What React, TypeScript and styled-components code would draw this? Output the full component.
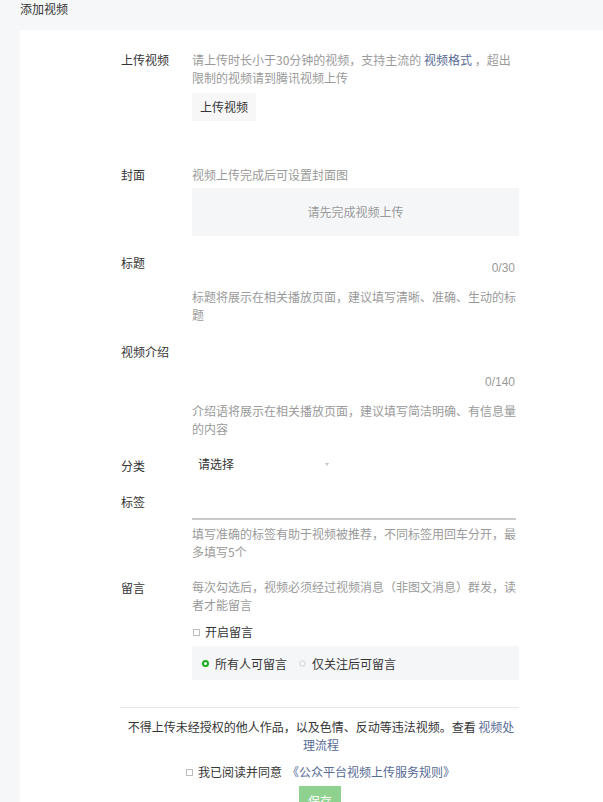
import styled, { createGlobalStyle } from "styled-components";

const GlobalStyle = createGlobalStyle`
  body {
    margin: 0;
    background-color: #f6f7f9;
    font-family: "Noto Sans CJK SC", "Noto Sans", sans-serif;
    font-size: 12px;
    color: #353535;
  }
`;

const Header = styled.div`
  height: 30px;
  padding-left: 20px;
  line-height: 18px;
  font-size: 12px;
  color: #353535;
`;

const Card = styled.div`
  margin-left: 20px;
  background-color: #fff;
  padding: 21px 0 20px 101px;
  min-height: 760px;
`;

const Form = styled.div`
  width: 398px;
`;

// 한 줄 = 라벨 + 입력
const Field = styled.div<{ gap?: number }>`
  display: grid;
  grid-template-columns: 71px 327px;
  margin-bottom: ${({ gap }) => gap ?? 0}px;
`;

const Label = styled.div<{ offset?: number }>`
  line-height: 18px;
  padding-top: ${({ offset }) => offset ?? 0}px;
  color: #353535;
`;

const Control = styled.div`
  display: flex;
  flex-direction: column;
`;

const Hint = styled.div<{ top?: number }>`
  line-height: 18px;
  color: #9a9a9a;
  margin-top: ${({ top }) => top ?? 0}px;
`;

const Link = styled.span`
  color: #576b95;
`;

const UploadBtn = styled.div`
  align-self: flex-start;
  margin-top: 6px;
  height: 28px;
  line-height: 28px;
  padding: 0 8px;
  background-color: #f7f7f8;
  color: #353535;
`;

const CoverBox = styled.div`
  margin-top: 4px;
  height: 48px;
  line-height: 48px;
  text-align: center;
  background-color: #f5f6f8;
  color: #9a9a9a;
`;

const TextBox = styled.div<{ h: number }>`
  height: ${({ h }) => h}px;
  display: flex;
  align-items: flex-end;
  justify-content: flex-end;
  padding: 0 4px 7px 0;
  box-sizing: border-box;
`;

const Counter = styled.span`
  line-height: 18px;
  color: #9a9a9a;
  font-family: "Liberation Sans", "Noto Sans", sans-serif;
  font-size: 12px;
`;

const Select = styled.div`
  width: 142px;
  height: 28px;
  display: flex;
  align-items: center;
  justify-content: space-between;
  padding: 0 5px 0 6px;
  box-sizing: border-box;
  color: #353535;
`;

const Arrow = styled.span`
  width: 0;
  height: 0;
  border-left: 2px solid transparent;
  border-right: 2px solid transparent;
  border-top: 3px solid #c4c4c4;
  margin-top: 2px;
`;

const TagInput = styled.div`
  height: 25px;
  width: 324px;
  border-bottom: 2px solid #c9c9c9;
`;

const CheckRow = styled.div<{ top?: number; center?: boolean }>`
  display: flex;
  align-items: center;
  justify-content: ${({ center }) => (center ? "center" : "flex-start")};
  gap: 5px;
  line-height: 18px;
  margin-top: ${({ top }) => top ?? 0}px;
  color: #353535;
`;

const Box = styled.span`
  width: 5px;
  height: 5px;
  border: 1px solid #bdbdbd;
  display: inline-block;
  margin-left: 1px;
`;

const RadioPanel = styled.div`
  margin-top: 5px;
  height: 34px;
  display: flex;
  align-items: center;
  gap: 12px;
  padding-left: 10px;
  background-color: #f5f6f8;
`;

const Radio = styled.div`
  display: flex;
  align-items: center;
  gap: 6px;
  color: #353535;
`;

const Dot = styled.span<{ on?: boolean }>`
  width: 3px;
  height: 3px;
  border-radius: 50%;
  border: 2px solid ${({ on }) => (on ? "#1aad19" : "#e3e3e3")};
  background-color: #fff;
`;

const Divider = styled.div`
  margin: 27px 0 0 -1px;
  width: 399px;
  border-top: 1px solid #e7e7eb;
`;

const Notice = styled.div`
  width: 390px;
  margin: 10px 0 0 5px;
  line-height: 18px;
  text-align: center;
  color: #353535;
`;

const SaveBtn = styled.div`
  margin: 5px auto 0;
  width: 42px;
  height: 30px;
  line-height: 30px;
  text-align: center;
  background-color: #8fd18e;
  color: #fff;
`;

const App = () => {
  return (
    <>
      <GlobalStyle />
      <Header>添加视频</Header>
      <Card>
        <Form>
          <Field gap={45}>
            <Label>上传视频</Label>
            <Control>
              <Hint>
                请上传时长小于30分钟的视频，支持主流的 <Link>视频格式</Link> ，超出限制的视频请到腾讯视频上传
              </Hint>
              <UploadBtn>上传视频</UploadBtn>
            </Control>
          </Field>

          <Field gap={18}>
            <Label>封面</Label>
            <Control>
              <Hint>视频上传完成后可设置封面图</Hint>
              <CoverBox>请先完成视频上传</CoverBox>
            </Control>
          </Field>

          <Field gap={19}>
            <Label>标题</Label>
            <Control>
              <TextBox h={30}>
                <Counter>0/30</Counter>
              </TextBox>
              <Hint top={4}>标题将展示在相关播放页面，建议填写清晰、准确、生动的标题</Hint>
            </Control>
          </Field>

          <Field gap={11}>
            <Label>视频介绍</Label>
            <Control>
              <TextBox h={55}>
                <Counter>0/140</Counter>
              </TextBox>
              <Hint top={4}>介绍语将展示在相关播放页面，建议填写简洁明确、有信息量的内容</Hint>
            </Control>
          </Field>

          <Field gap={16}>
            <Label offset={8}>分类</Label>
            <Control>
              <Select>
                请选择
                <Arrow />
              </Select>
            </Control>
          </Field>

          <Field gap={17}>
            <Label>标签</Label>
            <Control>
              <TagInput />
              <Hint top={5}>填写准确的标签有助于视频被推荐，不同标签用回车分开，最多填写5个</Hint>
            </Control>
          </Field>

          <Field>
            <Label offset={1}>留言</Label>
            <Control>
              <Hint>每次勾选后，视频必须经过视频消息（非图文消息）群发，读者才能留言</Hint>
              <CheckRow top={9}>
                <Box />
                开启留言
              </CheckRow>
              <RadioPanel>
                <Radio>
                  <Dot on />
                  所有人可留言
                </Radio>
                <Radio>
                  <Dot />
                  仅关注后可留言
                </Radio>
              </RadioPanel>
            </Control>
          </Field>

          <Divider />
          <Notice>
            不得上传未经授权的他人作品，以及色情、反动等违法视频。查看 <Link>视频处理流程</Link>
          </Notice>
          <CheckRow top={9} center>
            <Box />
            我已阅读并同意<Link>《公众平台视频上传服务规则》</Link>
          </CheckRow>
          <SaveBtn>保存</SaveBtn>
        </Form>
      </Card>
    </>
  );
};

export default App;
